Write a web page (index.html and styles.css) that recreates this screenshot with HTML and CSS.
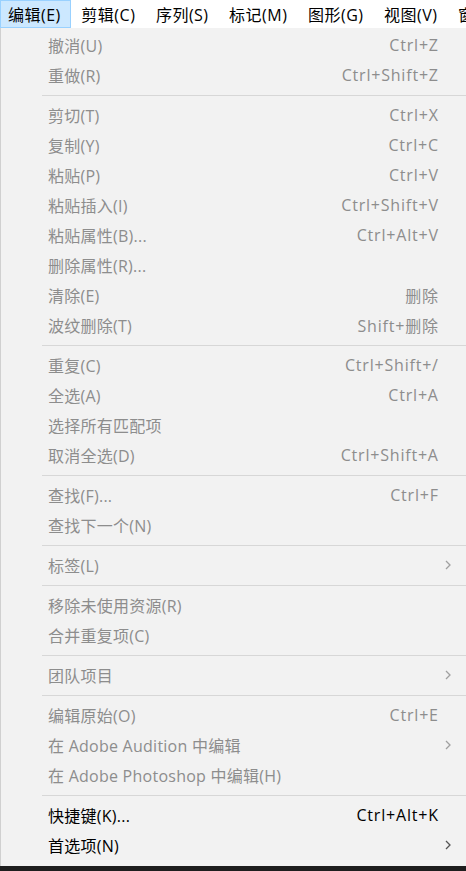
FILE: index.html
```html
<!DOCTYPE html>
<html lang="zh-CN">
<head>
    <meta charset="UTF-8">
    <meta name="viewport" content="width=device-width, initial-scale=1.0">
    <title>编辑菜单</title>
    <link rel="stylesheet" href="styles.css">
</head>
<body>
    <div class="menubar">
        <span class="menubar-item active">编辑(E)</span>
        <span class="menubar-item">剪辑(C)</span>
        <span class="menubar-item">序列(S)</span>
        <span class="menubar-item">标记(M)</span>
        <span class="menubar-item">图形(G)</span>
        <span class="menubar-item">视图(V)</span>
        <span class="menubar-item">窗口(W)</span>
    </div>

    <div class="menu">
        <div class="item disabled"><span class="label">撤消(U)</span><span class="key">Ctrl+Z</span></div>
        <div class="item disabled"><span class="label">重做(R)</span><span class="key">Ctrl+Shift+Z</span></div>
        <div class="sep"></div>
        <div class="item disabled"><span class="label">剪切(T)</span><span class="key">Ctrl+X</span></div>
        <div class="item disabled"><span class="label">复制(Y)</span><span class="key">Ctrl+C</span></div>
        <div class="item disabled"><span class="label">粘贴(P)</span><span class="key">Ctrl+V</span></div>
        <div class="item disabled"><span class="label">粘贴插入(I)</span><span class="key">Ctrl+Shift+V</span></div>
        <div class="item disabled"><span class="label">粘贴属性(B)...</span><span class="key">Ctrl+Alt+V</span></div>
        <div class="item disabled"><span class="label">删除属性(R)...</span></div>
        <div class="item disabled"><span class="label">清除(E)</span><span class="key">删除</span></div>
        <div class="item disabled"><span class="label">波纹删除(T)</span><span class="key">Shift+删除</span></div>
        <div class="sep"></div>
        <div class="item disabled"><span class="label">重复(C)</span><span class="key">Ctrl+Shift+/</span></div>
        <div class="item disabled"><span class="label">全选(A)</span><span class="key">Ctrl+A</span></div>
        <div class="item disabled"><span class="label">选择所有匹配项</span></div>
        <div class="item disabled"><span class="label">取消全选(D)</span><span class="key">Ctrl+Shift+A</span></div>
        <div class="sep"></div>
        <div class="item disabled"><span class="label">查找(F)...</span><span class="key">Ctrl+F</span></div>
        <div class="item disabled"><span class="label">查找下一个(N)</span></div>
        <div class="sep"></div>
        <div class="item disabled has-sub"><span class="label">标签(L)</span><svg class="arrow" viewBox="0 0 6 10"><path d="M1 1 L5 5 L1 9" /></svg></div>
        <div class="sep"></div>
        <div class="item disabled"><span class="label">移除未使用资源(R)</span></div>
        <div class="item disabled"><span class="label">合并重复项(C)</span></div>
        <div class="sep"></div>
        <div class="item disabled has-sub"><span class="label">团队项目</span><svg class="arrow" viewBox="0 0 6 10"><path d="M1 1 L5 5 L1 9" /></svg></div>
        <div class="sep"></div>
        <div class="item disabled"><span class="label">编辑原始(O)</span><span class="key">Ctrl+E</span></div>
        <div class="item disabled has-sub"><span class="label">在 Adobe Audition 中编辑</span><svg class="arrow" viewBox="0 0 6 10"><path d="M1 1 L5 5 L1 9" /></svg></div>
        <div class="item disabled"><span class="label">在 Adobe Photoshop 中编辑(H)</span></div>
        <div class="sep"></div>
        <div class="item"><span class="label">快捷键(K)...</span><span class="key">Ctrl+Alt+K</span></div>
        <div class="item has-sub"><span class="label">首选项(N)</span><svg class="arrow" viewBox="0 0 6 10"><path d="M1 1 L5 5 L1 9" /></svg></div>
    </div>

    <div class="taskbar"></div>
</body>
</html>
```

FILE: styles.css
```css
html, body {
    margin: 0;
    padding: 0;
}

body {
    width: 466px;
    height: 871px;
    overflow: hidden;
    background: #f2f2f2;
    font-family: "Open Sans", "Noto Sans CJK SC", sans-serif;
    font-size: 16px;
    letter-spacing: 0.5px;
    color: #000;
    display: flex;
    flex-direction: column;
}

.menubar {
    height: 28px;
    background: #fff;
    display: flex;
    align-items: stretch;
    white-space: nowrap;
    flex-shrink: 0;
}

.menubar-item {
    display: flex;
    align-items: center;
    padding: 0 9px 0 7px;
    margin-right: 2.5px;
    border: 1px solid transparent;
    box-sizing: border-box;
    flex-shrink: 0;
}

.menubar-item.active {
    background: #cce8ff;
    border-color: #99d1ff;
}

.menu {
    flex: 1;
    padding-top: 2px;
    border-left: 1px solid #d0d0d0;
    background: #f2f2f2;
}

.item {
    height: 30px;
    display: flex;
    align-items: center;
    padding: 0 28px 0 47px;
    white-space: nowrap;
}

.label {
    letter-spacing: 0.25px;
}

.item.has-sub {
    padding-right: 15px;
}

.item.disabled {
    color: #8d8d8d;
}

.key {
    margin-left: auto;
    letter-spacing: 0.8px;
    margin-right: -0.8px;
}

.arrow {
    margin-left: auto;
    width: 6px;
    height: 10px;
    fill: none;
    stroke: #a0a0a0;
    stroke-width: 1.3;
}

.item:not(.disabled) .arrow {
    stroke: #555;
}

.sep {
    height: 10px;
    display: flex;
    align-items: center;
    padding-left: 41px;
}

.sep::after {
    content: "";
    flex: 1;
    height: 1px;
    background: #d7d7d7;
}

.taskbar {
    height: 5px;
    background: #1e1e1e;
    flex-shrink: 0;
}
```
